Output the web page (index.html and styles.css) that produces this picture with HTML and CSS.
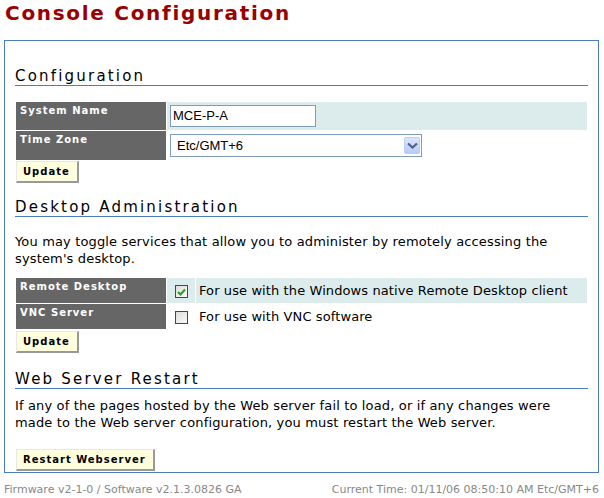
FILE: index.html
```html
<!DOCTYPE html>
<html>
<head>
<meta charset="utf-8">
<title>Console Configuration</title>
<link rel="stylesheet" href="styles.css">
</head>
<body>
<div class="page">
  <h1 class="title">Console Configuration</h1>
  <div class="panel">
    <h2 class="heading">Configuration</h2>
    <table class="form">
      <tr class="row-tall">
        <td class="label">System Name</td>
        <td class="value hl"><div class="input">MCE-P-A</div></td>
      </tr>
      <tr class="row-tall">
        <td class="label">Time Zone</td>
        <td class="value"><div class="select"><span class="select-text">Etc/GMT+6</span><span class="select-btn"><svg width="11" height="7" viewBox="0 0 11 7"><path d="M1 1.5 L5.5 5.5 L10 1.5" fill="none" stroke="#4d6185" stroke-width="2.2"/></svg></span></div></td>
      </tr>
    </table>
    <button class="btn">Update</button>

    <h2 class="heading h-desk">Desktop Administration</h2>
    <p class="text p-desk">You may toggle services that allow you to administer by remotely accessing the system's desktop.</p>
    <table class="form form-desk">
      <tr class="row-short">
        <td class="label">Remote Desktop</td>
        <td class="check hl"><span class="cb"><svg width="9" height="8" viewBox="0 0 9 8"><path d="M1 4 L3.5 6.5 L8 1.5" fill="none" stroke="#21a121" stroke-width="2"/></svg></span></td>
        <td class="desc hl">For use with the Windows native Remote Desktop client</td>
      </tr>
      <tr class="row-short">
        <td class="label">VNC Server</td>
        <td class="check"><span class="cb"></span></td>
        <td class="desc">For use with VNC software</td>
      </tr>
    </table>
    <button class="btn">Update</button>

    <h2 class="heading h-web">Web Server Restart</h2>
    <p class="text p-web">If any of the pages hosted by the Web server fail to load, or if any changes were made to the Web server configuration, you must restart the Web server.</p>
    <button class="btn btn-restart">Restart Webserver</button>
  </div>
  <div class="footer">
    <span>Firmware v2-1-0 / Software v2.1.3.0826 GA</span>
    <span>Current Time: 01/11/06 08:50:10 AM Etc/GMT+6</span>
  </div>
</div>
</body>
</html>
```
FILE: styles.css
```css
body {
  margin: 0;
  background: #fff;
  color: #000;
  font-family: "DejaVu Sans", Verdana, sans-serif;
}
.page {
  padding: 0 5px 0 4px;
}
.title {
  margin: 0 0 15px;
  padding: 1px 0 0 1px;
  font-size: 20px;
  line-height: 24px;
  font-weight: bold;
  color: #990000;
  letter-spacing: 1.7px;
}
.panel {
  border: 1px solid #4a7cc0;
  padding: 27px 10px 1px;
}
.heading {
  margin: 0;
  font-size: 15px;
  line-height: 17px;
  font-weight: normal;
  letter-spacing: 2.2px;
  border-bottom: 1px solid #4a7cc0;
}
.h-desk { margin-top: 16px; }
.h-web { margin-top: 18px; }
.form {
  width: 100%;
  border-spacing: 1px;
  margin-top: 15px;
}
.form-desk { margin: 10px 0 1px; }
.form td {
  padding: 0;
}
.row-tall { height: 28px; }
.row-short { height: 25px; }
.form td.label {
  width: 142px;
  padding: 3px 4px;
  vertical-align: top;
  background: #666;
  color: #fff;
  font-size: 10px;
  line-height: 12px;
  font-weight: bold;
  letter-spacing: 1px;
}
.hl { background: #dcecec; }
.form td.value {
  padding: 3px;
  vertical-align: top;
}
.input {
  box-sizing: border-box;
  width: 146px;
  height: 22px;
  border: 1px solid #7f9db9;
  background: #fff;
  padding: 2px 0 0 2px;
  font-family: "Liberation Sans", Arial, sans-serif;
  font-size: 13px;
  line-height: 16px;
}
.select {
  box-sizing: border-box;
  width: 252px;
  height: 23px;
  border: 1px solid #7f9db9;
  background: #fff;
  display: flex;
  align-items: center;
  justify-content: space-between;
  padding: 0 1px 0 6px;
  font-family: "Liberation Sans", Arial, sans-serif;
  font-size: 13px;
}
.select-btn {
  box-sizing: border-box;
  width: 16px;
  height: 17px;
  border: 1px solid #b9cdf5;
  border-radius: 2px;
  background: linear-gradient(#dbe6fe, #b7cbf8);
  display: flex;
  align-items: center;
  justify-content: center;
}
.form td.check {
  width: 28px;
  text-align: center;
  vertical-align: middle;
}
.cb {
  box-sizing: border-box;
  display: inline-flex;
  align-items: center;
  justify-content: center;
  width: 13px;
  height: 13px;
  border: 1px solid #1c5180;
  background: linear-gradient(135deg, #dcdcd7, #fbfbf9);
  vertical-align: middle;
}
.form td.desc {
  padding: 0 3px;
  vertical-align: middle;
  font-size: 13px;
  letter-spacing: 0.1px;
}
.text {
  font-size: 13px;
  line-height: 17px;
  letter-spacing: 0.15px;
  margin: 16px 0 0;
}
.p-web { margin-top: 8px; }
.btn {
  display: block;
  box-sizing: border-box;
  height: 22px;
  margin: 0 0 0 1px;
  padding: 0 7px 0 6px;
  background: #ffffdd;
  border-style: solid;
  border-width: 1px 2px 2px 1px;
  border-color: #e8e8e8 #999 #999 #e8e8e8;
  font-family: "DejaVu Sans", Verdana, sans-serif;
  font-size: 10px;
  font-weight: bold;
  letter-spacing: 1px;
  color: #000;
}
.btn-restart { margin-top: 18px; }
.footer {
  display: flex;
  justify-content: space-between;
  margin-top: 10px;
  font-size: 11px;
  line-height: 14px;
  color: #888;
}
```
